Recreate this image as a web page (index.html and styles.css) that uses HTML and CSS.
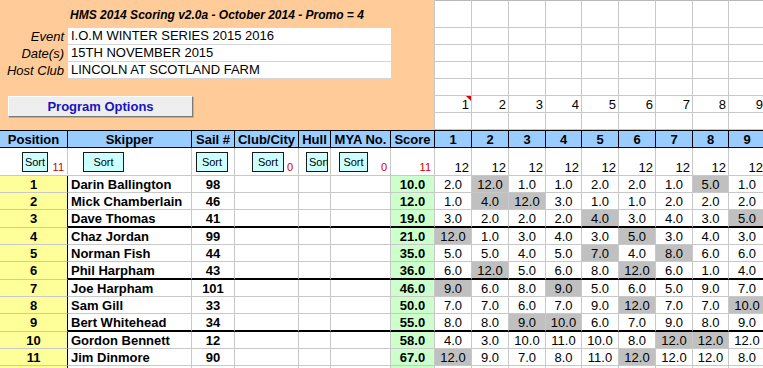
FILE: index.html
```html
<!DOCTYPE html>
<html>
<head>
<meta charset="utf-8">
<link rel="stylesheet" href="styles.css">
</head>
<body>
<div class="sheet">
  <div class="panel">
    <div class="title">HMS 2014 Scoring v2.0a - October 2014 - Promo = 4</div>
    <div class="field"><span class="lbl">Event</span><span class="val">I.O.M WINTER SERIES 2015 2016</span></div>
    <div class="field"><span class="lbl">Date(s)</span><span class="val">15TH NOVEMBER 2015</span></div>
    <div class="field"><span class="lbl">Host Club</span><span class="val">LINCOLN AT SCOTLAND FARM</span></div>
    <div class="gap"></div>
    <button class="prog">Program Options</button>
  </div>

  <div class="row top"><div class="c"></div><div class="c"></div><div class="c"></div><div class="c"></div><div class="c"></div><div class="c"></div><div class="c"></div><div class="c"></div><div class="c"></div></div>
  <div class="row"><div class="c"></div><div class="c"></div><div class="c"></div><div class="c"></div><div class="c"></div><div class="c"></div><div class="c"></div><div class="c"></div><div class="c"></div></div>
  <div class="row"><div class="c"></div><div class="c"></div><div class="c"></div><div class="c"></div><div class="c"></div><div class="c"></div><div class="c"></div><div class="c"></div><div class="c"></div></div>
  <div class="row"><div class="c"></div><div class="c"></div><div class="c"></div><div class="c"></div><div class="c"></div><div class="c"></div><div class="c"></div><div class="c"></div><div class="c"></div></div>
  <div class="row"><div class="c"></div><div class="c"></div><div class="c"></div><div class="c"></div><div class="c"></div><div class="c"></div><div class="c"></div><div class="c"></div><div class="c"></div></div>
  <div class="row"><div class="c rn"><span>1</span><i class="note"></i></div><div class="c rn">2</div><div class="c rn">3</div><div class="c rn">4</div><div class="c rn">5</div><div class="c rn">6</div><div class="c rn">7</div><div class="c rn">8</div><div class="c rn">9</div></div>
  <div class="row"><div class="c"></div><div class="c"></div><div class="c"></div><div class="c"></div><div class="c"></div><div class="c"></div><div class="c"></div><div class="c"></div><div class="c"></div></div>

  <div class="row head">
    <div class="c h">Position</div><div class="c h">Skipper</div><div class="c h">Sail #</div><div class="c h">Club/City</div><div class="c h">Hull</div><div class="c h">MYA No.</div><div class="c h">Score</div>
    <div class="c h">1</div><div class="c h">2</div><div class="c h">3</div><div class="c h">4</div><div class="c h">5</div><div class="c h">6</div><div class="c h">7</div><div class="c h">8</div><div class="c h">9</div>
  </div>

  <div class="row sorts">
    <div class="c s"><span class="sort b-pos">Sort</span><span class="cnt">11</span></div>
    <div class="c s"><span class="sort b-skip">Sort</span></div>
    <div class="c s"><span class="sort b-sail">Sort</span></div>
    <div class="c s"><span class="sort b-club">Sort</span><span class="cnt cnt-club">0</span></div>
    <div class="c s"><span class="sort b-hull">Sort</span></div>
    <div class="c s"><span class="sort b-mya">Sort</span><span class="cnt">0</span></div>
    <div class="c s"><span class="cnt">11</span></div>
    <div class="c tw">12</div><div class="c tw">12</div><div class="c tw">12</div><div class="c tw">12</div><div class="c tw">12</div><div class="c tw">12</div><div class="c tw">12</div><div class="c tw">12</div><div class="c tw">12</div>
  </div>

  <div class="row"><div class="c p">1</div><div class="c k">Darin Ballington</div><div class="c n">98</div><div class="c"></div><div class="c"></div><div class="c"></div><div class="c sc">10.0</div>
    <div class="c r">2.0</div><div class="c r g">12.0</div><div class="c r">1.0</div><div class="c r">1.0</div><div class="c r">2.0</div><div class="c r">2.0</div><div class="c r">1.0</div><div class="c r g">5.0</div><div class="c r">1.0</div></div>
  <div class="row"><div class="c p">2</div><div class="c k">Mick Chamberlain</div><div class="c n">46</div><div class="c"></div><div class="c"></div><div class="c"></div><div class="c sc">12.0</div>
    <div class="c r">1.0</div><div class="c r g">4.0</div><div class="c r g">12.0</div><div class="c r">3.0</div><div class="c r">1.0</div><div class="c r">1.0</div><div class="c r">2.0</div><div class="c r">2.0</div><div class="c r">2.0</div></div>
  <div class="row end"><div class="c p">3</div><div class="c k">Dave Thomas</div><div class="c n">41</div><div class="c"></div><div class="c"></div><div class="c"></div><div class="c sc">19.0</div>
    <div class="c r">3.0</div><div class="c r">2.0</div><div class="c r">2.0</div><div class="c r">2.0</div><div class="c r g">4.0</div><div class="c r">3.0</div><div class="c r">4.0</div><div class="c r">3.0</div><div class="c r g">5.0</div></div>
  <div class="row"><div class="c p">4</div><div class="c k">Chaz Jordan</div><div class="c n">99</div><div class="c"></div><div class="c"></div><div class="c"></div><div class="c sc">21.0</div>
    <div class="c r g">12.0</div><div class="c r">1.0</div><div class="c r">3.0</div><div class="c r">4.0</div><div class="c r">3.0</div><div class="c r g">5.0</div><div class="c r">3.0</div><div class="c r">4.0</div><div class="c r">3.0</div></div>
  <div class="row"><div class="c p">5</div><div class="c k">Norman Fish</div><div class="c n">44</div><div class="c"></div><div class="c"></div><div class="c"></div><div class="c sc">35.0</div>
    <div class="c r">5.0</div><div class="c r">5.0</div><div class="c r">4.0</div><div class="c r">5.0</div><div class="c r g">7.0</div><div class="c r">4.0</div><div class="c r g">8.0</div><div class="c r">6.0</div><div class="c r">6.0</div></div>
  <div class="row end"><div class="c p">6</div><div class="c k">Phil Harpham</div><div class="c n">43</div><div class="c"></div><div class="c"></div><div class="c"></div><div class="c sc">36.0</div>
    <div class="c r">6.0</div><div class="c r g">12.0</div><div class="c r">5.0</div><div class="c r">6.0</div><div class="c r">8.0</div><div class="c r g">12.0</div><div class="c r">6.0</div><div class="c r">1.0</div><div class="c r">4.0</div></div>
  <div class="row"><div class="c p">7</div><div class="c k">Joe Harpham</div><div class="c n">101</div><div class="c"></div><div class="c"></div><div class="c"></div><div class="c sc">46.0</div>
    <div class="c r g">9.0</div><div class="c r">6.0</div><div class="c r">8.0</div><div class="c r g">9.0</div><div class="c r">5.0</div><div class="c r">6.0</div><div class="c r">5.0</div><div class="c r">9.0</div><div class="c r">7.0</div></div>
  <div class="row"><div class="c p">8</div><div class="c k">Sam Gill</div><div class="c n">33</div><div class="c"></div><div class="c"></div><div class="c"></div><div class="c sc">50.0</div>
    <div class="c r">7.0</div><div class="c r">7.0</div><div class="c r">6.0</div><div class="c r">7.0</div><div class="c r">9.0</div><div class="c r g">12.0</div><div class="c r">7.0</div><div class="c r">7.0</div><div class="c r g">10.0</div></div>
  <div class="row end"><div class="c p">9</div><div class="c k">Bert Whitehead</div><div class="c n">34</div><div class="c"></div><div class="c"></div><div class="c"></div><div class="c sc">55.0</div>
    <div class="c r">8.0</div><div class="c r">8.0</div><div class="c r g">9.0</div><div class="c r g">10.0</div><div class="c r">6.0</div><div class="c r">7.0</div><div class="c r">9.0</div><div class="c r">8.0</div><div class="c r">9.0</div></div>
  <div class="row"><div class="c p">10</div><div class="c k">Gordon Bennett</div><div class="c n">12</div><div class="c"></div><div class="c"></div><div class="c"></div><div class="c sc">58.0</div>
    <div class="c r">4.0</div><div class="c r">3.0</div><div class="c r">10.0</div><div class="c r">11.0</div><div class="c r">10.0</div><div class="c r">8.0</div><div class="c r g">12.0</div><div class="c r g">12.0</div><div class="c r">12.0</div></div>
  <div class="row"><div class="c p">11</div><div class="c k">Jim Dinmore</div><div class="c n">90</div><div class="c"></div><div class="c"></div><div class="c"></div><div class="c sc">67.0</div>
    <div class="c r g">12.0</div><div class="c r">9.0</div><div class="c r">7.0</div><div class="c r">8.0</div><div class="c r">11.0</div><div class="c r g">12.0</div><div class="c r">12.0</div><div class="c r">12.0</div><div class="c r">8.0</div></div>
  <div class="row"><div class="c p"></div><div class="c k"></div><div class="c n"></div><div class="c"></div><div class="c"></div><div class="c"></div><div class="c sc"></div>
    <div class="c r"></div><div class="c r"></div><div class="c r"></div><div class="c r"></div><div class="c r"></div><div class="c r"></div><div class="c r"></div><div class="c r"></div><div class="c r"></div></div>
</div>
</body>
</html>
```
FILE: styles.css
```css
* { box-sizing: border-box; }
html, body { margin: 0; padding: 0; background: #fff; }
body {
  font-family: "Liberation Sans", Arial, sans-serif;
  font-size: 13px;
  color: #000;
  overflow: hidden;
  width: 763px;
  height: 368px;
}
.sheet {
  display: grid;
  width: 766px;
  grid-template-columns: 68px 124px 43px 64px 32px 60px 44px 37px 37px 37px 36px 37px 37px 37px 36px 37px;
  grid-template-rows: 28px repeat(6, 17px) 18px 28px 17px 17px 18px 17px 17px 18px 17px 17px 18px 17px 17px 17px;
}
.row { display: contents; }
.c {
  border-right: 1px solid #c8c8c8;
  border-bottom: 1px solid #c8c8c8;
  display: flex;
  align-items: center;
  white-space: nowrap;
  overflow: hidden;
  line-height: 1;
  position: relative;
}
.top > .c { border-top: 1px solid #b8b8b8; }

/* orange info panel */
.panel {
  grid-column: 1 / 8;
  grid-row: 1 / 8;
  background: #ffcc99;
  border-right: 1px solid #c8c8c8;
  display: flex;
  flex-direction: column;
}
.title {
  height: 28px;
  display: flex;
  align-items: center;
  justify-content: center;
  font-size: 12px;
  font-weight: bold;
  font-style: italic;
  padding-top: 1px;
}
.field { display: flex; height: 17px; }
.lbl {
  width: 68px;
  text-align: right;
  padding-right: 4px;
  font-style: italic;
  line-height: 17px;
}
.val {
  width: 323px;
  background: #fff;
  border-bottom: 1px solid #d4d4d4;
  padding-left: 3px;
  line-height: 16px;
}
.gap { height: 17px; }
.prog {
  margin-left: 8px;
  width: 185px;
  height: 21px;
  padding: 0;
  font-family: "Liberation Sans", Arial, sans-serif;
  font-size: 13px;
  font-weight: bold;
  color: #1414c4;
  background: #eeeeee;
  border: 1px solid;
  border-color: #ffffff #7a7a7a #7a7a7a #ffffff;
  box-shadow: 1px 1px 0 #b0b0b0;
}

/* race number row */
.rn { justify-content: flex-end; padding-right: 2px; }
.note {
  position: absolute;
  top: 0;
  right: 0;
  width: 0;
  height: 0;
  border-top: 5px solid #e00000;
  border-left: 5px solid transparent;
}

/* header */
.h {
  background: #99ccff;
  font-weight: bold;
  justify-content: center;
  border-top: 1px solid #000;
  border-right: 1px solid #000;
  border-bottom: 1px solid #000;
}

/* sort row */
.s { align-items: flex-start; }
.sort {
  margin-top: 4px;
  height: 20px;
  background: #ccffff;
  border: 1px solid #1a1a1a;
  font-size: 11px;
  display: flex;
  align-items: center;
  justify-content: center;
  overflow: hidden;
  flex: none;
}
.b-pos { margin-left: 22px; width: 26px; }
.b-skip { margin-left: 15px; width: 41px; }
.b-sail { margin-left: 4px; width: 32px; }
.b-club { margin-left: 17px; width: 32px; }
.b-hull { margin-left: 7px; width: 22px; justify-content: flex-start; padding-left: 2px; }
.b-mya { margin-left: 8px; width: 29px; }
.cnt {
  margin-left: auto;
  align-self: flex-end;
  margin-bottom: 2px;
  padding-right: 3px;
  font-size: 11px;
  color: #cc0000;
}
.cnt-club { padding-right: 5px; }
.tw { justify-content: flex-end; align-items: flex-end; padding-right: 2px; padding-bottom: 1px; }

/* data rows */
.p {
  background: #ffff99;
  font-weight: bold;
  justify-content: center;
  border-right: 1px solid #000;
}
.k { font-weight: bold; padding-left: 3px; }
.n { font-weight: bold; justify-content: center; }
.sc { background: #ccffcc; font-weight: bold; justify-content: center; }
.r { justify-content: center; }
.g { background: #c0c0c0; }
.end > .c:not(.p) { border-bottom: 2px solid #000; }
```
